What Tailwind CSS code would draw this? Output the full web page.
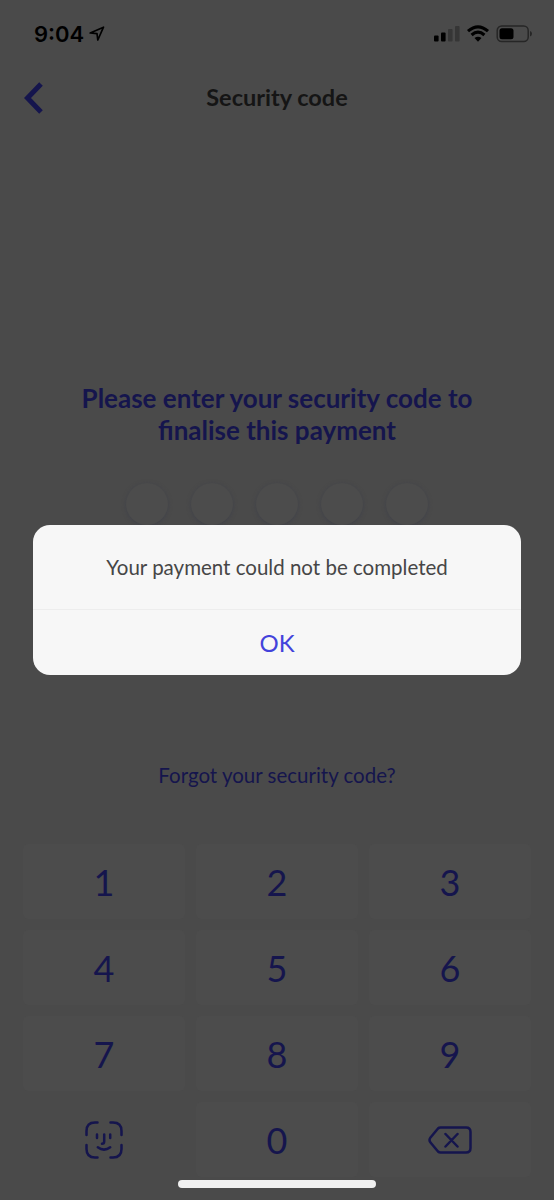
<!DOCTYPE html>
<html lang="en">
<head>
<meta charset="utf-8">
<title>Security code</title>
<script src="https://cdn.jsdelivr.net/npm/@tailwindcss/browser@4"></script>
</head>
<body class="bg-[#4a4a4a]">
<div class="relative flex h-[1200px] w-[554px] flex-col overflow-hidden bg-[#4a4a4a] font-['Lato',sans-serif] text-[#15154d]">
  <!-- Status bar -->
  <div class="flex h-[68px] items-center justify-between pl-[34px] pr-[21px] text-black">
    <div class="flex items-center gap-[5px]">
      <span class="font-['Inter',sans-serif] text-[22px] font-semibold leading-none">9:04</span>
      <svg class="h-4 w-4" viewBox="0 0 16 16" fill="none" stroke="currentColor" stroke-width="1.7" stroke-linejoin="round"><path d="M14.5 1.2 L8.8 14 L8 7.6 L1.2 7 Z"/></svg>
    </div>
    <div class="flex items-center">
      <svg class="h-[18px] w-[99px]" viewBox="0 0 99 18">
        <rect x="0" y="10.5" width="4.6" height="6" rx="1"/>
        <rect x="7" y="7.5" width="4.6" height="9" rx="1"/>
        <rect x="14" y="4" width="4.6" height="12.5" rx="1" fill="#363636"/>
        <rect x="21" y="1" width="4.6" height="15.500" rx="1" fill="#363636"/>
        <g fill="none" stroke="#000" stroke-width="3.100">
          <path d="M34 6.200 Q44 -2.600 54 6.200"/>
          <path d="M37.600 10 Q44 4.300 50.400 10"/>
        </g>
        <path d="M40.500 13.100 Q44 10.200 47.500 13.100 L44 16.700 Z"/>
        <rect x="63.200" y="1" width="31" height="15.600" rx="4.500" fill="none" stroke="#262626" stroke-width="1.500"/>
        <rect x="65.500" y="3.300" width="14" height="11" rx="2.500"/>
        <path d="M96 6 Q98 6.500 98 8.800 Q98 11 96 11.600 Z" fill="#262626"/>
      </svg>
    </div>
  </div>

  <!-- Title bar -->
  <div class="grid h-[60px] grid-cols-[60px_1fr_60px] items-center">
    <svg class="ml-6 h-8 w-5" viewBox="0 0 20 32" fill="none" stroke="#15154d" stroke-width="5"><path d="M17 2 L3.500 16 L17 30"/></svg>
    <h1 class="text-center text-[23.500px] font-bold leading-none text-[#151515]">Security code</h1>
  </div>

  <h2 class="mt-[254px] text-center text-[26px] font-bold leading-8">Please enter your security code to<br>finalise this payment</h2>

  <div class="mt-[37px] flex justify-center gap-[23px]">
    <div class="h-[42px] w-[42px] rounded-full bg-[#4c4c4c] shadow-[0_1px_4px_#40424a]"></div>
    <div class="h-[42px] w-[42px] rounded-full bg-[#4c4c4c] shadow-[0_1px_4px_#40424a]"></div>
    <div class="h-[42px] w-[42px] rounded-full bg-[#4c4c4c] shadow-[0_1px_4px_#40424a]"></div>
    <div class="h-[42px] w-[42px] rounded-full bg-[#4c4c4c] shadow-[0_1px_4px_#40424a]"></div>
    <div class="h-[42px] w-[42px] rounded-full bg-[#4c4c4c] shadow-[0_1px_4px_#40424a]"></div>
  </div>

  <p class="mt-[238px] text-center text-[20.500px] leading-6">Forgot your security code?</p>

  <!-- Keypad -->
  <div class="mt-[57px] grid auto-rows-[75px] grid-cols-3 gap-[11px] px-[23px] text-[36px] leading-none *:flex *:items-center *:justify-center *:rounded-[5px]">
    <div class="bg-[#4c4c4c]">1</div>
    <div class="bg-[#4c4c4c]">2</div>
    <div class="bg-[#4c4c4c]">3</div>
    <div class="bg-[#4c4c4c]">4</div>
    <div class="bg-[#4c4c4c]">5</div>
    <div class="bg-[#4c4c4c]">6</div>
    <div class="bg-[#4c4c4c]">7</div>
    <div class="bg-[#4c4c4c]">8</div>
    <div class="bg-[#4c4c4c]">9</div>
    <div>
      <svg class="h-[38px] w-[38px]" viewBox="0 0 38 38" fill="none" stroke="currentColor" stroke-width="2.500" stroke-linecap="round" stroke-linejoin="round">
        <path d="M1.500 14 V10 Q1.500 1.500 10 1.500 H12.500 M25.500 1.500 H28 Q36.500 1.500 36.500 10 V14 M36.500 24 V28 Q36.500 36.500 28 36.500 H25.500 M12.500 36.500 H10 Q1.500 36.500 1.500 28 V24"/>
        <path d="M12 13.500 V17 M25.200 13.500 V17 M19.200 13.500 V20.500 Q19.200 22.800 17 22.800 M12.800 26.300 Q19 31 25.200 26.300"/>
      </svg>
    </div>
    <div class="bg-[#4c4c4c]">0</div>
    <div class="bg-[#4c4c4c]">
      <svg class="h-7 w-11" viewBox="0 0 44 28" fill="none" stroke="currentColor" stroke-width="2.500" stroke-linecap="round" stroke-linejoin="round">
        <path d="M12.500 1.500 H38 Q42.500 1.500 42.500 6 V22 Q42.500 26.500 38 26.500 H12.500 Q11 26.500 10 25.500 L2.500 16.500 Q0.500 14 2.500 11.500 L10 2.500 Q11 1.500 12.500 1.500 Z M17.500 8 L29.500 20.500 M29.500 8 L17.500 20.500"/>
      </svg>
    </div>
  </div>

  <!-- Alert -->
  <div class="absolute left-[33px] top-[525px] flex h-[150px] w-[488px] flex-col rounded-[17px] bg-[#f7f7f7]">
    <p class="flex h-[85px] items-center justify-center border-b border-[#ededed] text-[20.500px] leading-none text-[#464646]">Your payment could not be completed</p>
    <button class="flex-1 text-[24px] leading-none text-[#4343db]">OK</button>
  </div>

  <!-- Home indicator -->
  <div class="absolute left-[178px] top-[1180px] h-2 w-[198px] rounded-full bg-[#f0f0f0]"></div>
</div>
</body>
</html>
